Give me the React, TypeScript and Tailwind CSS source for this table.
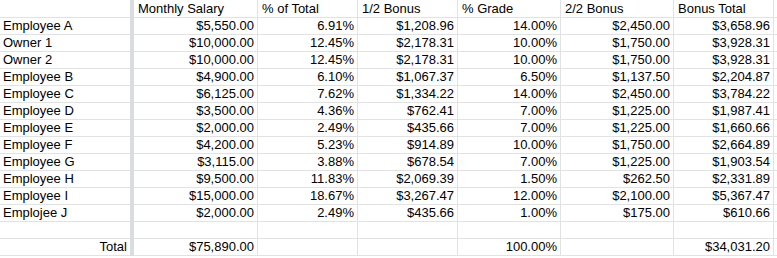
import React from "react"

const headers = ["Monthly Salary", "% of Total", "1/2 Bonus", "% Grade", "2/2 Bonus", "Bonus Total"]

// widths include the 1px right gridline
const widths = ["w-[124px]", "w-[100px]", "w-[100px]", "w-[103px]", "w-[113px]", "w-[100px]"]

const rows: string[][] = [
  ["Employee A", "$5,550.00", "6.91%", "$1,208.96", "14.00%", "$2,450.00", "$3,658.96"],
  ["Owner 1", "$10,000.00", "12.45%", "$2,178.31", "10.00%", "$1,750.00", "$3,928.31"],
  ["Owner 2", "$10,000.00", "12.45%", "$2,178.31", "10.00%", "$1,750.00", "$3,928.31"],
  ["Employee B", "$4,900.00", "6.10%", "$1,067.37", "6.50%", "$1,137.50", "$2,204.87"],
  ["Employee C", "$6,125.00", "7.62%", "$1,334.22", "14.00%", "$2,450.00", "$3,784.22"],
  ["Employee D", "$3,500.00", "4.36%", "$762.41", "7.00%", "$1,225.00", "$1,987.41"],
  ["Employee E", "$2,000.00", "2.49%", "$435.66", "7.00%", "$1,225.00", "$1,660.66"],
  ["Employee F", "$4,200.00", "5.23%", "$914.89", "10.00%", "$1,750.00", "$2,664.89"],
  ["Employee G", "$3,115.00", "3.88%", "$678.54", "7.00%", "$1,225.00", "$1,903.54"],
  ["Employee H", "$9,500.00", "11.83%", "$2,069.39", "1.50%", "$262.50", "$2,331.89"],
  ["Employee I", "$15,000.00", "18.67%", "$3,267.47", "12.00%", "$2,100.00", "$5,367.47"],
  ["Emplojee J", "$2,000.00", "2.49%", "$435.66", "1.00%", "$175.00", "$610.66"],
  ["", "", "", "", "", "", ""],
  ["Total", "$75,890.00", "", "", "100.00%", "", "$34,031.20"],
]

function Row({ cells, header, totalRow }: { cells: string[]; header?: boolean; totalRow?: boolean }) {
  return (
    <div className={`flex ${header ? "h-[18px]" : "h-[17px]"}`}>
      {/* frozen name column */}
      <div
        className={`w-[130px] shrink-0 border-b border-[#e2e2e2] px-[3px] flex items-end pb-[1px] ${
          totalRow ? "justify-end" : ""
        }`}
      >
        <span className="whitespace-nowrap">{cells[0]}</span>
      </div>
      <div className="w-[4px] shrink-0 bg-[#dadce0]" />
      {widths.map((w, i) => (
        <div
          key={i}
          className={`${w} shrink-0 border-b border-r border-[#e2e2e2] px-[3px] flex items-end pb-[1px] ${
            header ? "justify-start pl-[4px]" : "justify-end"
          }`}
        >
          <span className="whitespace-nowrap">{cells[i + 1]}</span>
        </div>
      ))}
      <div className="flex-1 border-b border-[#e2e2e2]" />
    </div>
  )
}

export default function App() {
  return (
    <div
      className="w-[777px] h-[258px] overflow-hidden bg-white text-black text-[13px] leading-[15px]"
      style={{ fontFamily: '"Liberation Sans", Arial, sans-serif' }}
    >
      <Row cells={["", ...headers]} header />
      {rows.map((r, i) => (
        <Row key={i} cells={r} totalRow={i === rows.length - 1} />
      ))}
    </div>
  )
}
